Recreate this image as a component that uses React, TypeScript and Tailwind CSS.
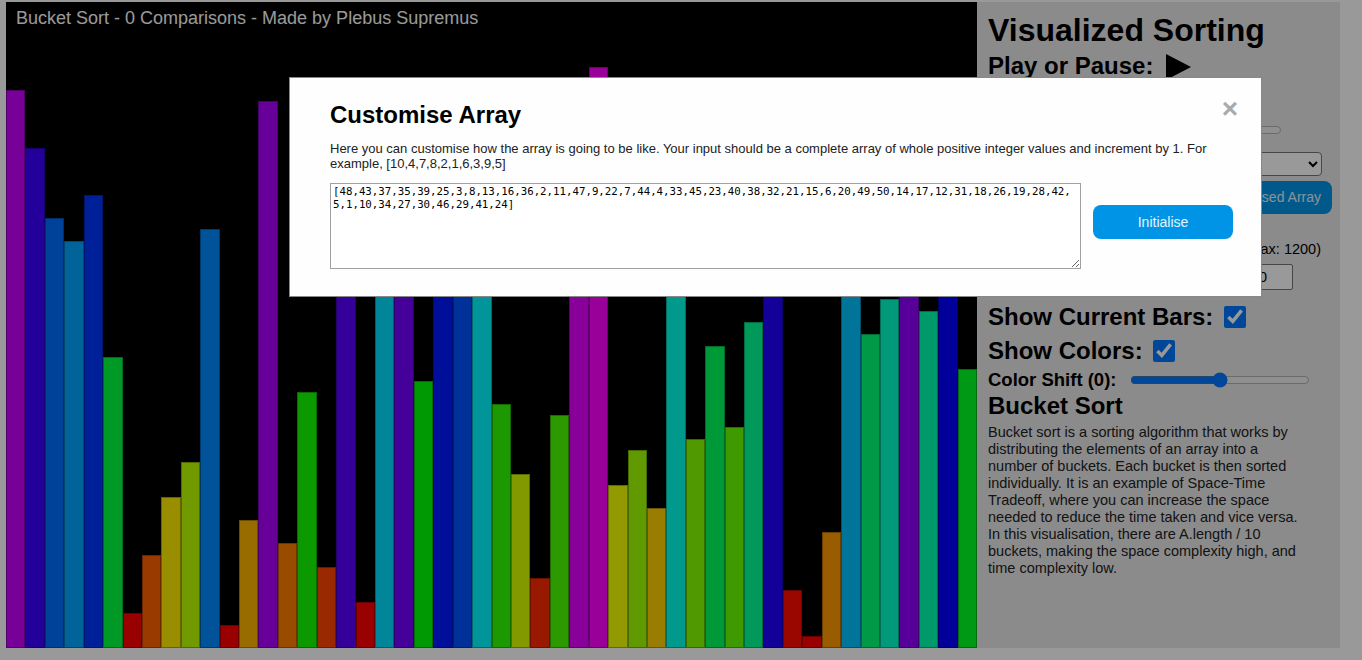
const values = [
  48, 43, 37, 35, 39, 25, 3, 8, 13, 16, 36, 2, 11, 47, 9, 22, 7, 44, 4, 33, 45, 23, 40, 38, 32, 21, 15, 6, 20, 49,
  50, 14, 17, 12, 31, 18, 26, 19, 28, 42, 5, 1, 10, 34, 27, 30, 46, 29, 41, 24,
];

const arrayText = '[' + values.join(',') + ']';

const barColor = (v: number) => `hsl(${Math.max(0, v * 6.6 - 30)}, 100%, 50%)`;

const Canvas = () => {
  return (
    <div className="relative w-[971px] h-[646px] bg-black flex items-end">
      {values.map((v, i) => (
        <div
          key={i}
          className="flex-1 border border-black/30"
          style={{ height: `${(v / 50) * 0.9 * 646}px`, background: barColor(v) }}
        />
      ))}
      <div className="absolute left-[10px] top-[6px] text-[18px] leading-[21px] text-white whitespace-nowrap">
        Bucket Sort - 0 Comparisons - Made by Plebus Supremus
      </div>
    </div>
  );
};

const Panel = () => {
  return (
    <div className="w-[363px] h-[646px] bg-[#e8e8e8] pl-[11px] pt-[10px] flex flex-col text-black">
      <h1 className="text-[32px] font-bold leading-[36px] whitespace-nowrap">Visualized Sorting</h1>

      <div className="mt-[4px] h-[28px] flex items-center gap-[13px]">
        <h2 className="text-[24px] font-bold leading-[28px]">Play or Pause:</h2>
        <svg width="25" height="26" viewBox="0 0 25 26" className="mt-[2px]">
          <polygon points="0,0 25,13 0,26" fill="#000" />
        </svg>
      </div>

      {/* controls under the modal */}
      <div className="mt-[40px] h-[20px] w-[294px] flex items-center justify-between">
        <span className="text-[18px] font-bold leading-[20px]">Array Size (50):</span>
        <input type="range" min={5} max={200} defaultValue={50} className="w-[150px] m-0" />
      </div>

      <select className="mt-[12px] h-[24px] w-[334px] border border-[#767676] rounded-[4px] bg-white text-[14px] px-1">
        <option>Bucket Sort</option>
      </select>

      <div className="mt-[5px] h-[33px] w-[344px] flex gap-[6px]">
        <button className="flex-1 rounded-[8px] bg-[#0094e6] text-white/90 text-[14px]">Random Array</button>
        <button className="px-[11px] rounded-[8px] bg-[#0094e6] text-white/90 text-[14px]">Reversed Array</button>
      </div>

      <div className="mt-[26px] w-[333px] text-right text-[14.5px] leading-[18px]">Delay in ms (Max: 1200)</div>

      <div className="mt-[6px] h-[26px] w-[305px] flex items-center justify-between">
        <span className="text-[14.5px]">Delay:</span>
        <input
          type="text"
          defaultValue="50"
          className="w-[46px] h-[26px] border border-[#767676] rounded-[2px] bg-white px-[3px] text-[14.5px]"
        />
      </div>

      <div className="mt-[13px] h-[28px] flex items-center gap-[11px]">
        <span className="text-[24px] font-bold leading-[28px]">Show Current Bars:</span>
        <input type="checkbox" defaultChecked className="w-[22px] h-[22px] m-0" />
      </div>

      <div className="mt-[6px] h-[28px] flex items-center gap-[10px]">
        <span className="text-[24px] font-bold leading-[28px]">Show Colors:</span>
        <input type="checkbox" defaultChecked className="w-[22px] h-[22px] m-0" />
      </div>

      <div className="mt-[4px] h-[21px] flex items-center gap-[14px]">
        <span className="text-[18.5px] font-bold leading-[21px]">Color Shift (0):</span>
        <input type="range" min={-50} max={50} defaultValue={0} className="w-[180px] m-0" />
      </div>

      <h2 className="mt-[2px] text-[24px] font-bold leading-[28px]">Bucket Sort</h2>

      <p className="mt-[4px] w-[322px] text-[14.5px] leading-[17px] text-[#222]">
        Bucket sort is a sorting algorithm that works by distributing the elements of an array into a number of
        buckets. Each bucket is then sorted individually. It is an example of Space-Time Tradeoff, where you can
        increase the space needed to reduce the time taken and vice versa. In this visualisation, there are A.length
        / 10 buckets, making the space complexity high, and time complexity low.
      </p>
    </div>
  );
};

const Modal = () => {
  return (
    <div className="fixed inset-0 bg-black/40 z-10">
      <div className="relative ml-[289px] mt-[77px] w-[973px] bg-[#fefefe] border border-[#888] pl-[40px] pr-[28px] pt-[23px] pb-[27px]">
        <span className="absolute right-[23px] top-[17px] text-[28px] font-bold leading-[28px] text-[#aaa] cursor-pointer">
          ×
        </span>
        <h2 className="text-[24px] font-bold leading-[28px] text-black">Customise Array</h2>
        <p className="mt-[12px] text-[13px] leading-[15px] text-[#222]">
          Here you can customise how the array is going to be like. Your input should be a complete array of whole
          positive integer values and increment by 1. For example, [10,4,7,8,2,1,6,3,9,5]
        </p>
        <div className="mt-[12px] flex items-start gap-[12px]">
          <textarea
            defaultValue={arrayText}
            className="w-[751px] h-[86px] border border-[#a0a0a0] pl-[2px] pt-[2px] pr-[6px] text-[10.76px] leading-[12.5px] text-black bg-white"
            style={{ fontFamily: '"DejaVu Sans Mono", monospace' }}
          />
          <button className="mt-[22px] w-[140px] h-[34px] rounded-[8px] bg-[#0094e6] text-[14px] text-white/90">
            Initialise
          </button>
        </div>
      </div>
    </div>
  );
};

export default function App() {
  return (
    <div
      className="min-h-screen bg-white pl-[6px] pt-[2px] flex"
      style={{ fontFamily: '"Liberation Sans", Arial, sans-serif' }}
    >
      <Canvas />
      <Panel />
      <Modal />
    </div>
  );
}
